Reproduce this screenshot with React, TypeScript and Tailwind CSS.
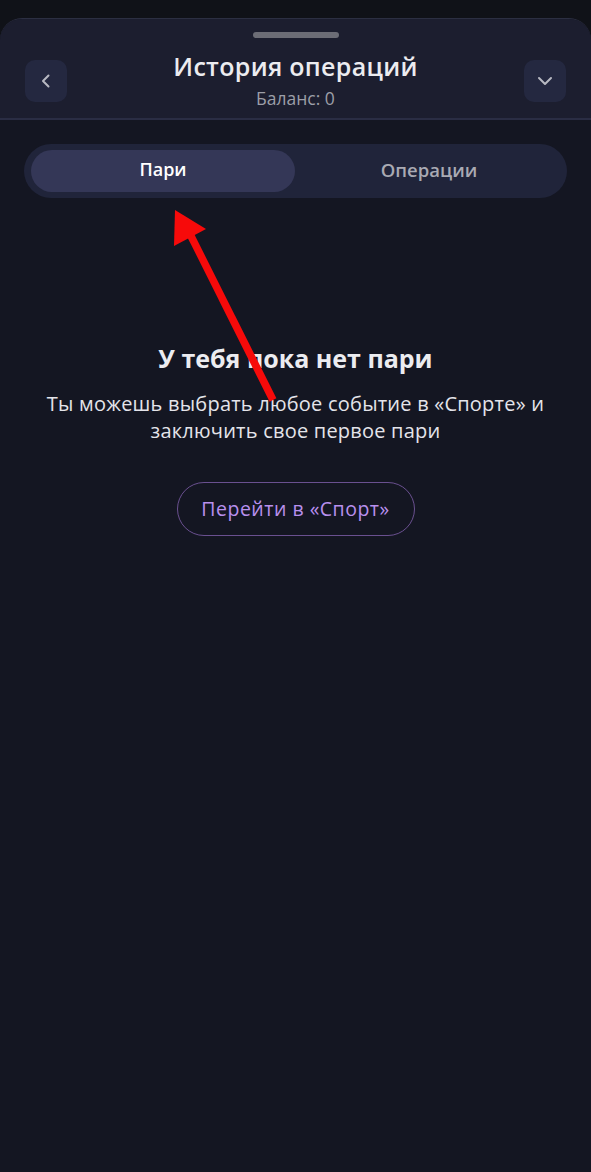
import React from "react";

export default function App() {
  return (
    <div
      className="relative w-[591px] h-[1172px] overflow-hidden bg-[#101218]"
      style={{ fontFamily: '"Open Sans", "Noto Sans", sans-serif' }}
    >
      <div className="mt-[18px] h-[1154px] rounded-t-[22px] bg-[#141622] border-t border-[#2c2f42] overflow-hidden flex flex-col">
        {/* header */}
        <div className="bg-[#1c1e2f] border-b-2 border-[#2a2d44] h-[101px] flex flex-col">
          <div className="flex justify-center pt-[13px]">
            <div className="w-[86px] h-[6px] rounded-full bg-[#6c6d76]" />
          </div>
          <div className="flex items-start justify-between px-[25px] mt-[12px]">
            <button className="w-[42px] h-[42px] rounded-[10px] bg-[#242840] flex items-center justify-center mt-[10px]">
              <svg width="16" height="16" viewBox="0 0 16 16" fill="none">
                <path d="M10.5 2.5 L5 8 L10.5 13.5" stroke="#b8b9c2" strokeWidth="2" strokeLinecap="round" strokeLinejoin="round" />
              </svg>
            </button>
            <div className="flex flex-col items-center">
              <div className="text-[25px] leading-[32px] font-semibold text-[#ececf0] tracking-[0.3px]">
                История операций
              </div>
              <div className="text-[17.5px] leading-[22px] text-[#9c9ea8] mt-[5px]">Баланс: 0</div>
            </div>
            <button className="w-[42px] h-[42px] rounded-[10px] bg-[#242840] flex items-center justify-center mt-[10px]">
              <svg width="18" height="18" viewBox="0 0 18 18" fill="none">
                <path d="M3 6 L9 12 L15 6" stroke="#b8b9c2" strokeWidth="2" strokeLinecap="round" strokeLinejoin="round" />
              </svg>
            </button>
          </div>
        </div>

        {/* tabs */}
        <div className="px-[24px] mt-[24px]">
          <div className="h-[54px] rounded-full bg-[#20243a] flex items-center px-[7px] gap-[7px]">
            <div className="w-[264px] h-[42px] pb-[3px] rounded-full bg-[#343757] flex items-center justify-center text-[18px] font-semibold text-white">
              Пари
            </div>
            <div className="flex-1 h-[42px] pb-[3px] pr-[4px] flex items-center justify-center text-[18.5px] font-semibold text-[#a9aab3]">
              Операции
            </div>
          </div>
        </div>

        {/* empty state */}
        <div className="flex flex-col items-center mt-[145px]">
          <div className="text-[25px] leading-[30px] font-bold text-[#ececf0]">У тебя пока нет пари</div>
          <div className="mt-[17px] text-[20px] leading-[27px] tracking-[0.22px] text-[#e4e4ea] text-center w-[570px]">
            Ты можешь выбрать любое событие в «Спорте» и
            <br />
            заключить свое первое пари
          </div>
          <button className="mt-[38px] w-[238px] h-[54px] rounded-full border-[1.5px] border-[#6a5090] text-[19.5px] tracking-[0.5px] font-medium text-[#b990ee]">
            Перейти в «Спорт»
          </button>
        </div>
      </div>

      {/* red annotation arrow */}
      <svg className="absolute left-0 top-0 pointer-events-none" width="591" height="1172" viewBox="0 0 591 1172">
        <line x1="273" y1="400" x2="190" y2="234" stroke="#f70a0a" strokeWidth="7.5" />
        <polygon points="175,210 206,229 174,246" fill="#f70a0a" />
      </svg>
    </div>
  );
}
